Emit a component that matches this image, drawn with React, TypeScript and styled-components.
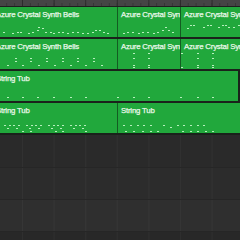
import styled, { createGlobalStyle } from 'styled-components'

const GlobalStyle = createGlobalStyle`
  html, body {
    margin: 0;
    padding: 0;
    background: #2a2a2a;
    overflow: hidden;
  }
`

const BAR = 31.6
const GRID_START = 22

type Note = [number, number]

type RegionData = {
  start: number
  end: number
  title?: string
  notes: Note[]
}

type TrackData = {
  top: number
  regions: RegionData[]
}

const row = (xs: number[], y: number): Note[] => xs.map((x) => [x, y] as Note)

const tracks: TrackData[] = [
  {
    top: 7,
    regions: [
      {
        start: -8,
        end: 117,
        title: 'Azure Crystal Synth Bells',
        notes: [
          [3, 32], [12, 33], [17, 32], [20, 32], [28, 33], [32, 32], [37, 30], [38, 27],
          [42, 28], [45, 32], [50, 32], [53, 33], [58, 32], [62, 32], [67, 33], [72, 32],
          [77, 32], [82, 33], [87, 33], [92, 32], [95, 30], [99, 30], [103, 32], [107, 33],
        ],
      },
      {
        start: 117,
        end: 180,
        title: 'Azure Crystal Synth Bells',
        notes: [
          [123, 33], [127, 32], [132, 32], [138, 33], [142, 32], [147, 32], [153, 33],
          [157, 32], [162, 30], [165, 27], [168, 30], [172, 32],
        ],
      },
      {
        start: 180,
        end: 250,
        title: 'Azure Crystal Synth Bells',
        notes: [
          [187, 28], [190, 25], [193, 25], [203, 27], [207, 25], [210, 25], [218, 27],
          [222, 25], [225, 25], [228, 27], [233, 27], [238, 25],
        ],
      },
    ],
  },
  {
    top: 39,
    regions: [
      {
        start: -8,
        end: 117,
        title: 'Azure Crystal Synth Bells',
        notes: [
          ...row([15, 30, 46, 62, 77, 93], 58),
          ...row([15, 30, 46, 62, 77, 93], 61),
          ...row([7, 22, 38, 54, 70, 85, 101], 65),
        ],
      },
      {
        start: 117,
        end: 180,
        title: 'Azure Crystal Synth Bells',
        notes: [...row([133, 148], 53), ...row([133, 148], 58), ...row([133, 148], 65), ...row([133, 148], 67)],
      },
      {
        start: 180,
        end: 250,
        title: 'Azure Crystal Synth Bells',
        notes: [
          ...row([181, 197, 212], 53),
          ...row([197, 212], 58),
          ...row([197, 212], 65),
          ...row([181, 197, 212], 67),
        ],
      },
    ],
  },
  {
    top: 71,
    regions: [
      {
        start: -8,
        end: 238,
        title: 'String Tub',
        notes: row([7, 22, 37, 53, 70, 85, 117, 133, 148, 180, 197, 212], 97),
      },
    ],
  },
  {
    top: 103,
    regions: [
      {
        start: -8,
        end: 117,
        title: 'String Tub',
        notes: [
          ...row([4, 9, 13, 18, 26, 31, 35, 40, 48, 53, 57, 62, 70, 75, 79, 84], 125),
          ...row([7, 16, 29, 38, 51, 60, 73, 82], 128),
          ...row([22, 30, 55, 62, 85], 131),
        ],
      },
      {
        start: 117,
        end: 250,
        title: 'String Tub',
        notes: [
          ...row([123, 130, 137, 143, 150, 163, 177, 183, 190, 197, 203], 125),
          ...row([170], 127),
          ...row([125, 133, 142, 150, 157, 182, 190, 197, 205, 212], 131),
        ],
      },
    ],
  },
]

const Arrange = styled.div`
  width: 240px;
  height: 240px;
  overflow: hidden;
  display: flex;
  flex-direction: column;
  background: #2a2a2a;
  font-family: 'Liberation Sans', Arial, sans-serif;
`

const Ruler = styled.div`
  height: 7px;
  flex: none;
  background-color: #454545;
  background-image:
    linear-gradient(to right, #2c2c2c 1px, transparent 1px),
    linear-gradient(to right, #363636 1px, transparent 1px);
  background-size: ${BAR}px 100%, ${BAR / 4}px 100%;
  background-position: ${GRID_START}px 0, ${GRID_START}px 3px;
  background-repeat: repeat-x;
  border-bottom: 1px solid #1e1e1e;
  box-sizing: border-box;
`

const Lane = styled.div`
  height: 32px;
  flex: none;
  display: flex;
  margin-left: -8px;
  background: #1a221b;
  padding-bottom: 2px;
  box-sizing: border-box;
`

const Region = styled.div<{ $width: number }>`
  position: relative;
  flex: none;
  width: ${(p) => p.$width}px;
  height: 30px;
  background: #21a83c;
  border-left: 1px solid #145c22;
  box-sizing: border-box;
  overflow: hidden;
`

const RegionTitle = styled.div`
  padding: 3px 0 0 3px;
  font-size: 7.8px;
  letter-spacing: -0.2px;
  line-height: 9px;
  color: #eaf8ea;
  white-space: nowrap;
  overflow: hidden;
  -webkit-text-stroke: 0.25px #eaf8ea;
`

const NoteDash = styled.div`
  position: absolute;
  width: 2px;
  height: 1px;
  background: #b6f0bc;
`

const EmptyLanes = styled.div`
  flex: 1;
  display: flex;
  flex-direction: column;
  background-image: linear-gradient(to right, #3a3a3a 1px, transparent 1px);
  background-size: ${BAR}px 100%;
  background-position: ${GRID_START}px 0;
`

const EmptyLane = styled.div<{ $shade: string; $height: number }>`
  flex: none;
  height: ${(p) => p.$height}px;
  background: ${(p) => p.$shade};
  border-bottom: 1px solid #262626;
  box-sizing: border-box;
`

const TrackLane = ({ track }: { track: TrackData }) => (
  <Lane>
    {track.regions.map((r, i) => (
      <Region key={i} $width={r.end - r.start}>
        {r.title && <RegionTitle>{r.title}</RegionTitle>}
        {r.notes.map(([x, y], j) => (
          <NoteDash key={j} style={{ left: x - r.start - 1, top: y - track.top }} />
        ))}
      </Region>
    ))}
  </Lane>
)

export default function App() {
  return (
    <>
      <GlobalStyle />
      <Arrange>
        <Ruler />
        {tracks.map((t, i) => (
          <TrackLane key={i} track={t} />
        ))}
        <EmptyLanes>
          <EmptyLane $shade="rgba(43,43,43,0.6)" $height={33} />
          <EmptyLane $shade="rgba(46,46,46,0.6)" $height={32} />
          <EmptyLane $shade="rgba(51,51,51,0.6)" $height={32} />
          <EmptyLane $shade="rgba(40,40,40,0.6)" $height={10} />
        </EmptyLanes>
      </Arrange>
    </>
  )
}
